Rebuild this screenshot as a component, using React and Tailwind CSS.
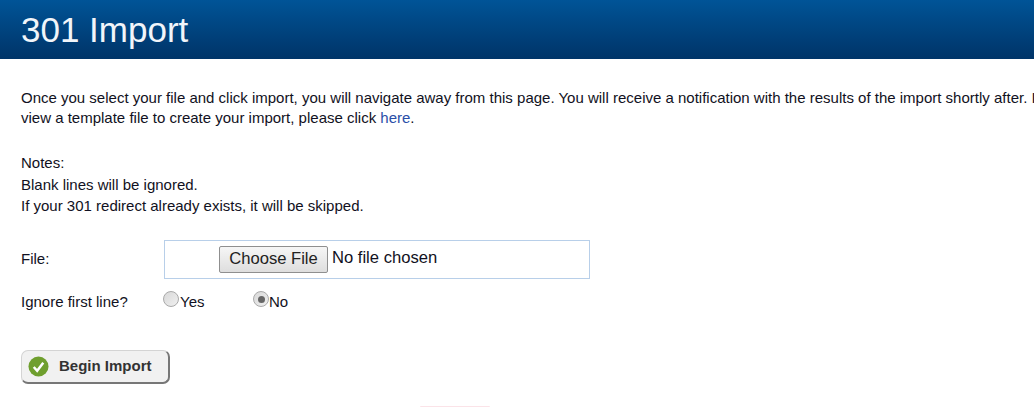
export default function App() {
  return (
    <div className="h-[407px] w-[1034px] overflow-hidden bg-white font-['Liberation_Sans',Arial,sans-serif] text-[15px] text-[#111122]">
      <header className="h-[59px] w-full bg-gradient-to-b from-[#005497] to-[#003468] pl-[21px] pt-[11px]">
        <h1 className="text-[35px] leading-[38px] text-[#f1f5fa]">301 Import</h1>
      </header>

      <main className="w-[1300px] pl-[21px] pt-[29px]">
        <p className="w-[1250px] leading-[20px]">
          Once you select your file and click import, you will navigate away from this page. You will receive a notification with the results of the import shortly after. If you would like to
          <br />
          view a template file to create your import, please click{" "}
          <a href="#" className="text-[#2a4fa8]">here</a>.
        </p>

        <div className="mt-[24px] leading-[21.5px]">
          <div>Notes:</div>
          <div>Blank lines will be ignored.</div>
          <div>If your 301 redirect already exists, it will be skipped.</div>
        </div>

        <form className="mt-[23px]">
          <div className="flex items-center">
            <label className="w-[143px]">File:</label>
            <div className="flex h-[39px] w-[426px] items-center border border-[#b8cfe9] pl-[54px]">
              <button type="button" className="h-[27px] w-[109px] rounded-[2px] border border-[#8f8f8f] bg-gradient-to-b from-[#f6f6f6] to-[#dedede] text-[16.6px] leading-none text-[#222222]">
                Choose File
              </button>
              <span className="mb-[2px] ml-[4px] text-[16.6px] leading-none">No file chosen</span>
            </div>
          </div>

          <div className="mt-[13px] flex h-[21px] items-center">
            <label className="w-[142px]">Ignore first line?</label>
            <div className="flex w-[90px] items-center">
              <span className="mb-[6px] h-[16px] w-[16px] rounded-full border border-[#a9a9a9] bg-gradient-to-br from-[#d8d8d8] to-[#f0f0f0]"></span>
              <span className="ml-px">Yes</span>
            </div>
            <div className="flex items-center">
              <span className="mb-[6px] flex h-[16px] w-[16px] items-center justify-center rounded-full border border-[#a9a9a9] bg-gradient-to-br from-[#d8d8d8] to-[#f0f0f0]">
                <span className="h-[7px] w-[7px] rounded-full bg-[#666666]"></span>
              </span>
              <span>No</span>
            </div>
          </div>

          <button type="button" className="mt-[37px] flex h-[34px] w-[149px] items-center rounded-[7px] border border-[#d4d4d4] border-r-2 border-b-2 border-r-[#777777] border-b-[#777777] bg-[#f1f1f1] pl-[6px] text-[15px] font-bold text-[#333333]">
            <svg width="21" height="21" viewBox="0 0 22 22" className="shrink-0">
              <circle cx="11" cy="11" r="10.5" fill="#6f9f2e" />
              <path d="M6 11.5l3.6 4L16 7" fill="none" stroke="#ffffff" strokeWidth="2.6" />
            </svg>
            <span className="ml-[10px]">Begin Import</span>
          </button>
        </form>

        <div className="ml-[399px] mt-[22px] h-px w-[70px] rounded-t bg-[#fbe3e8]"></div>
      </main>
    </div>
  );
}
